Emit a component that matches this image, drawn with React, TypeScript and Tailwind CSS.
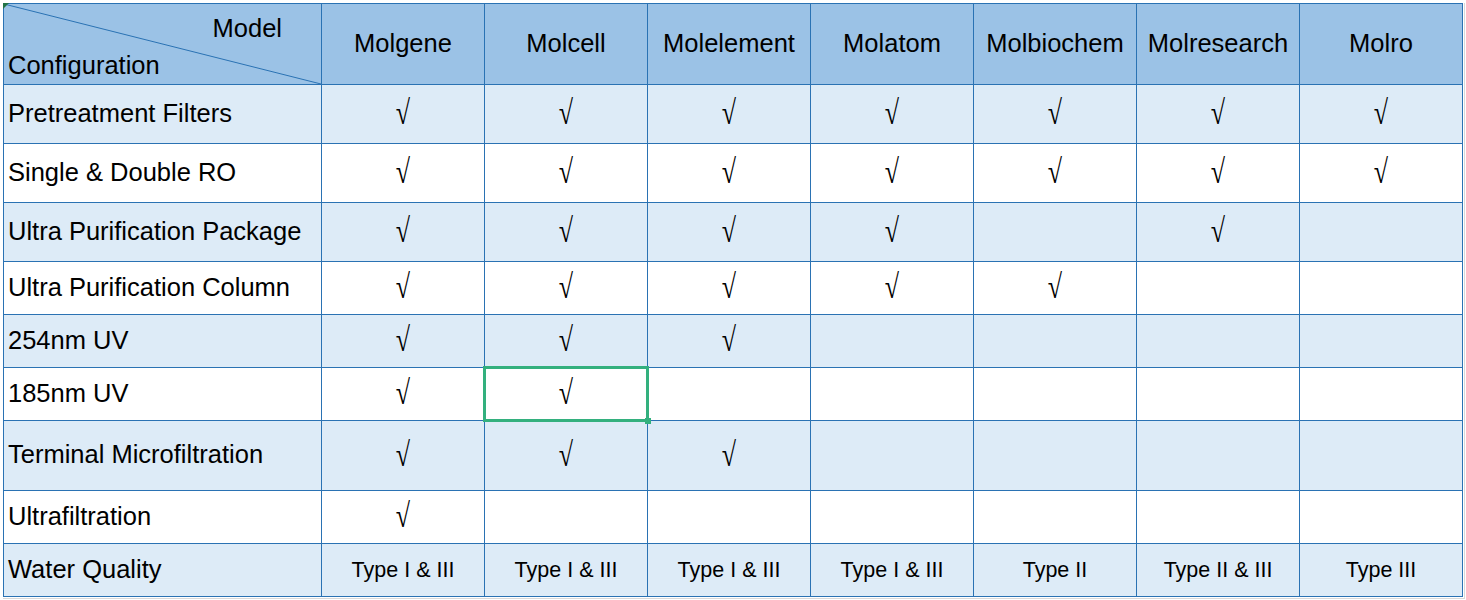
const models = ['Molgene', 'Molcell', 'Molelement', 'Molatom', 'Molbiochem', 'Molresearch', 'Molro'];

const rows: { label: string; checks: number[] }[] = [
  { label: 'Pretreatment Filters', checks: [1, 1, 1, 1, 1, 1, 1] },
  { label: 'Single & Double RO', checks: [1, 1, 1, 1, 1, 1, 1] },
  { label: 'Ultra Purification Package', checks: [1, 1, 1, 1, 0, 1, 0] },
  { label: 'Ultra Purification Column', checks: [1, 1, 1, 1, 1, 0, 0] },
  { label: '254nm UV', checks: [1, 1, 1, 0, 0, 0, 0] },
  { label: '185nm UV', checks: [1, 1, 0, 0, 0, 0, 0] },
  { label: 'Terminal Microfiltration', checks: [1, 1, 1, 0, 0, 0, 0] },
  { label: 'Ultrafiltration', checks: [1, 0, 0, 0, 0, 0, 0] },
];

const quality = ['Type I & III', 'Type I & III', 'Type I & III', 'Type I & III', 'Type II', 'Type II & III', 'Type III'];

export default function App() {
  return (
    <div className="min-h-[600px] bg-white font-['Liberation_Sans',Arial,sans-serif] text-black">
      <div className="ml-[3px] mt-[3px] w-[1462px] border-r border-b border-[#d9d9d9] pr-px pb-px">
        <div className="grid grid-cols-[317px_repeat(7,162px)] grid-rows-[80px_58px_58px_58px_52px_52px_52px_69px_52px_52px] gap-px bg-[#2a72b3] p-px w-[1460px]">
          {/* corner header */}
          <div className="relative bg-[#9bc2e6]">
            <svg className="absolute inset-0 h-full w-full" viewBox="0 0 100 100" preserveAspectRatio="none">
              <line x1="0" y1="0" x2="100" y2="100" stroke="#2a72b3" strokeWidth="1" vectorEffect="non-scaling-stroke" />
            </svg>
            <div className="absolute -left-px -top-px h-0 w-0 border-t-[6px] border-r-[6px] border-t-[#217346] border-r-transparent" />
            <span className="absolute right-[39px] top-[8px] text-[25.5px] leading-[32px]">Model</span>
            <span className="absolute left-[4px] top-[45px] text-[25.5px] leading-[32px]">Configuration</span>
          </div>
          {models.map((m) => (
            <div key={m} className="flex items-center justify-center bg-[#9bc2e6] pb-[2px] text-[25.5px]">
              {m}
            </div>
          ))}

          {rows.map((r, i) => {
            const bg = i % 2 === 0 ? 'bg-[#ddebf7]' : 'bg-white';
            return [
              <div key={r.label} className={`flex items-center pb-[2px] pl-[4px] text-[25.5px] ${bg}`}>
                {r.label}
              </div>,
              ...r.checks.map((c, j) => (
                <div key={r.label + j} className={`relative flex items-center justify-center ${bg} ${i === 5 && j === 1 ? 'z-10' : ''}`}>
                  {c ? (
                    <span className="inline-block scale-y-[1.3] font-['Liberation_Serif','Times_New_Roman',serif] text-[26px] leading-none">√</span>
                  ) : null}
                  {i === 5 && j === 1 && (
                    <div className="absolute -inset-[2px] border-[3px] border-[#33b07e]">
                      <div className="absolute -bottom-[5px] -right-[5px] h-[6px] w-[6px] bg-[#33b07e]" />
                    </div>
                  )}
                </div>
              )),
            ];
          })}

          <div className="flex items-center bg-[#ddebf7] pb-[2px] pl-[4px] text-[25.5px]">Water Quality</div>
          {quality.map((q, j) => (
            <div key={j} className="flex items-center justify-center bg-[#ddebf7] text-[21.5px]">
              {q}
            </div>
          ))}
        </div>
      </div>
    </div>
  );
}
